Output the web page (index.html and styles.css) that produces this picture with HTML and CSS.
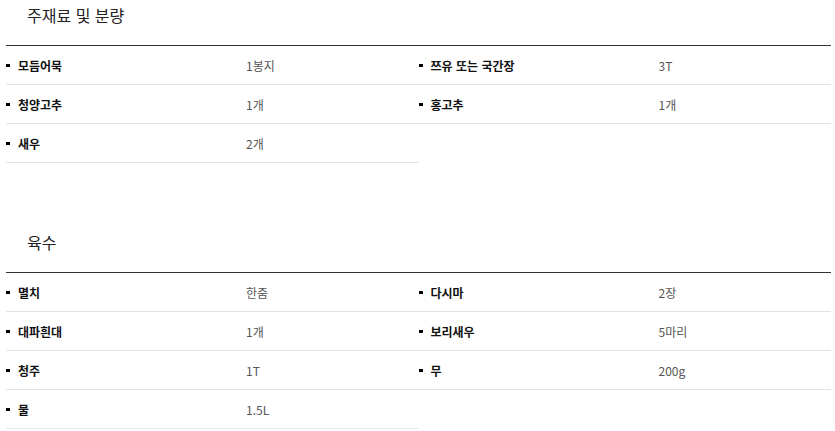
FILE: index.html
```html
<!DOCTYPE html>
<html lang="ko">
<head>
<meta charset="utf-8">
<link rel="stylesheet" href="styles.css">
</head>
<body>
<div class="wrap">
  <section class="sec">
    <h3 class="sec-title">주재료 및 분량</h3>
    <ul class="list">
      <li class="item"><span class="name">모듬어묵</span><span class="amt">1봉지</span></li>
      <li class="item"><span class="name">쯔유 또는 국간장</span><span class="amt">3T</span></li>
      <li class="item"><span class="name">청양고추</span><span class="amt">1개</span></li>
      <li class="item"><span class="name">홍고추</span><span class="amt">1개</span></li>
      <li class="item"><span class="name">새우</span><span class="amt">2개</span></li>
    </ul>
  </section>
  <section class="sec">
    <h3 class="sec-title">육수</h3>
    <ul class="list">
      <li class="item"><span class="name">멸치</span><span class="amt">한줌</span></li>
      <li class="item"><span class="name">다시마</span><span class="amt">2장</span></li>
      <li class="item"><span class="name">대파흰대</span><span class="amt">1개</span></li>
      <li class="item"><span class="name">보리새우</span><span class="amt">5마리</span></li>
      <li class="item"><span class="name">청주</span><span class="amt">1T</span></li>
      <li class="item"><span class="name">무</span><span class="amt">200g</span></li>
      <li class="item"><span class="name">물</span><span class="amt">1.5L</span></li>
    </ul>
  </section>
</div>
</body>
</html>
```
FILE: styles.css
```css
* { box-sizing: border-box; }
body {
  margin: 0;
  background: #fff;
  font-family: "Noto Sans CJK KR", "Noto Sans", sans-serif;
  color: #000;
}
.wrap {
  width: 825px;
  margin-left: 6px;
}
.sec { margin-bottom: 64px; }
.sec:last-child { margin-bottom: 0; }
.sec-title {
  margin: 0;
  padding-left: 21px;
  font-size: 16px;
  font-weight: 400;
  line-height: 30px;
  color: #222;
  border-bottom: 1px solid #333;
  box-sizing: content-box;
  height: 45px;
}
.list {
  list-style: none;
  margin: 0;
  padding: 0;
  display: flex;
  flex-wrap: wrap;
}
.item {
  width: 50%;
  height: 39px;
  border-bottom: 1px solid #e3e3e3;
  display: flex;
  align-items: center;
  font-size: 12px;
}
.item::before {
  content: "";
  width: 4px;
  height: 3px;
  background: #000;
  margin-right: 8px;
}
.name {
  width: 228px;
  font-weight: 700;
  color: #111;
}
.amt {
  color: #555;
}
```
